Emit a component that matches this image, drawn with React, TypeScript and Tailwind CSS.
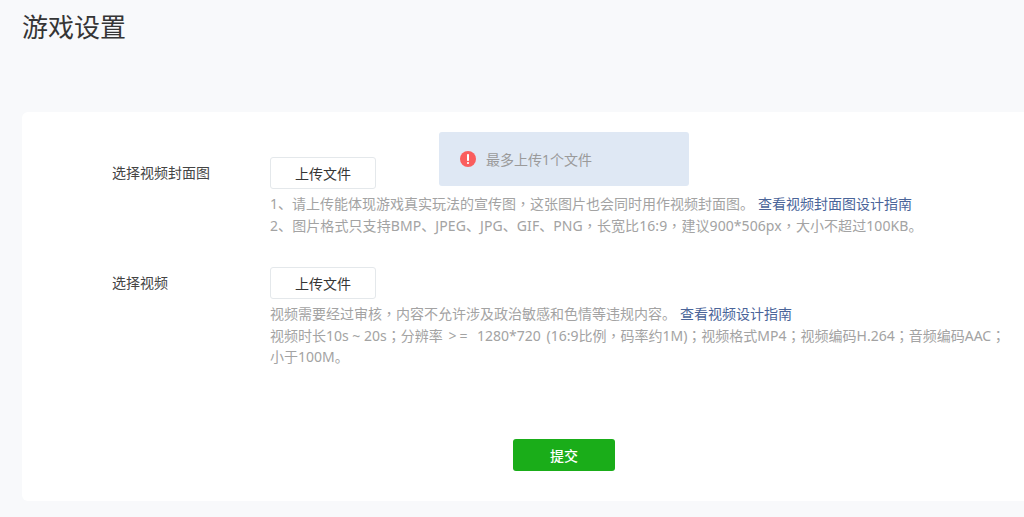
const fontStack = "font-['Noto_Sans','Noto_Sans_CJK_SC',sans-serif]";

// centred fullwidth marks, the SC face sets them low-left
const Mark = ({ children }: { children: string }) => (
    <span className="font-['Noto_Sans_CJK_TC',sans-serif]">{children}</span>
);

const HelpLine = ({ className, children }: { className?: string; children: React.ReactNode }) => (
    <p className={`h-[22px] overflow-visible whitespace-nowrap ${className ?? ""}`}>{children}</p>
);

const UploadRow = ({ label, children }: { label: string; children: React.ReactNode }) => (
    <div className="flex">
        <div className="w-[248px] pl-[90px] pt-[6px] text-[14px] leading-[20px] text-[#444444]">{label}</div>
        <div className="flex-1 min-w-0">
            <button className="block w-[106px] h-[32px] bg-white border border-[#e4e8eb] rounded-[3px] text-[14px] text-[#353535]">
                上传文件
            </button>
            <div className="mt-[3px] text-[14px] leading-[22px] text-[#a3a3a3]">{children}</div>
        </div>
    </div>
);

const GuideLink = ({ children }: { children: React.ReactNode }) => (
    <span className="ml-[4px] text-[14px] text-[#4a6499]">{children}</span>
);

export default function App() {
    return (
        <div className={`${fontStack} relative w-[1024px] h-[517px] overflow-hidden bg-[#f8f9fb]`}>
            <h1 className="pl-[22px] pt-[9px] h-[112px] text-[26px] leading-[36px] font-normal text-[#353535]">游戏设置</h1>

            <div className="ml-[22px] h-[389px] bg-white rounded-l-[6px] pt-[45px] pr-[12px]">
                <UploadRow label="选择视频封面图">
                    <HelpLine>
                        1、请上传能体现游戏真实玩法的宣传图<Mark>，</Mark>这张图片也会同时用作视频封面图。
                        <GuideLink>查看视频封面图设计指南</GuideLink>
                    </HelpLine>
                    <HelpLine className="tracking-[0.08px]">
                        2、图片格式只支持BMP、JPEG、JPG、GIF、PNG<Mark>，</Mark>长宽比16:9<Mark>，</Mark>建议900*506px<Mark>，</Mark>大小不超过100KB。
                    </HelpLine>
                </UploadRow>

                <div className="mt-[31px]">
                    <UploadRow label="选择视频">
                        <HelpLine>
                            视频需要经过审核<Mark>，</Mark>内容不允许涉及政治敏感和色情等违规内容。
                            <GuideLink>查看视频设计指南</GuideLink>
                        </HelpLine>
                        <HelpLine>
                            视频时长10s ~ 20s<Mark>；</Mark>分辨率 <span className="ml-[2px] mr-[3px] tracking-[3px]">&gt;=</span> 1280*720 <span className="ml-[2px]">(16:9比例</span><Mark>，</Mark>码率约1M)<Mark>；</Mark>视频格式MP4<Mark>；</Mark>视频编码H.264<Mark>；</Mark>音频编码AAC<Mark>；</Mark>
                        </HelpLine>
                        <HelpLine>小于100M。</HelpLine>
                    </UploadRow>
                </div>

                <div className="mt-[71px] pl-[491px]">
                    <button className="block w-[102px] h-[32px] bg-[#1aad19] rounded-[3px] text-[14px] font-medium text-white">提交</button>
                </div>
            </div>

            {/* toast */}
            <div className="absolute left-[439px] top-[132px] w-[250px] h-[54px] rounded-[3px] bg-[#dfe8f4] flex items-center pl-[21px]">
                <svg width="16" height="16" viewBox="0 0 16 16" className="shrink-0">
                    <circle cx="8" cy="8" r="8" fill="#fa5d5d" />
                    <rect x="7" y="3" width="2" height="7" rx="0.8" fill="#fff" />
                    <rect x="7" y="11" width="2" height="2" rx="0.8" fill="#fff" />
                </svg>
                <span className="ml-[10px] text-[14px] text-[#9a9a9a]">最多上传1个文件</span>
            </div>
        </div>
    );
}
